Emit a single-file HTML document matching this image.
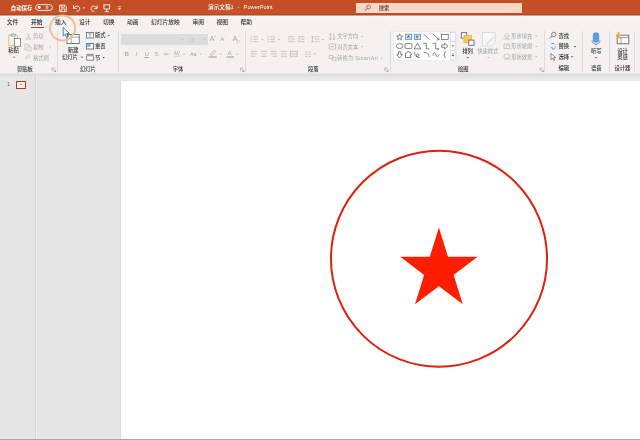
<!DOCTYPE html>
<html lang="zh"><head><meta charset="utf-8"><title>PowerPoint</title>
<style>
html,body{margin:0;padding:0}
body{width:640px;height:440px;overflow:hidden;position:relative;background:#e6e6e6;font-family:"Liberation Sans","Noto Sans CJK SC",sans-serif}
.t{position:absolute;font-size:6px;line-height:8px;height:8px;white-space:nowrap;color:#333;font-weight:500}
.w{color:#fff}
.g{color:#a4a4a4;font-weight:400}
.b{font-weight:bold}
svg{position:absolute;left:0;top:0}
#ui{position:absolute;left:0;top:0;width:640px;height:100px;filter:blur(0.35px)}
</style></head><body>
<div style="position:absolute;left:0;top:0;width:640px;height:15px;background:linear-gradient(#c44f27 0,#c44f27 9.6px,#c3522b 10.4px,#c3522b 13.5px,#b34a24 14.2px,#b04822 15px)"></div>
<div style="position:absolute;left:0;top:15px;width:640px;height:1px;background:#d6a18e"></div>
<div style="position:absolute;left:0;top:16px;width:640px;height:57px;background:linear-gradient(#fbfaf9 0,#fbfaf9 1px,#f3f2f1 1.6px)"></div>
<div style="position:absolute;left:0;top:73px;width:640px;height:7px;background:linear-gradient(#e9e9e8 0,#e9e9e8 1px,#dcdcdc 1px,#dcdcdc 2px,#e0e0e0 2px,#e0e0e0 3px,#e4e4e4 3px,#e4e4e4 4px,#e7e7e7 4px,#e7e7e7 5px,#e9e9e9 5px,#e9e9e9 6px,#eaeaea 6px)"></div>
<div style="position:absolute;left:35px;top:75px;width:1px;height:364px;background:#dadada;box-shadow:1px 0 0 #ebebeb"></div>
<div style="position:absolute;left:120px;top:80px;width:520px;height:359px;background:#fff;border-left:1px solid #dcdcdc;border-top:1px solid #e6e6e6;box-sizing:border-box"></div>
<div style="position:absolute;left:0;top:439px;width:640px;height:1px;background:#a6a6a6"></div>
<div style="position:absolute;left:356px;top:3px;width:166.4px;height:10px;background:#fbd7c4"></div>
<div style="position:absolute;left:31.2px;top:27px;width:12.4px;height:1.2px;background:#b5442a"></div>
<div style="position:absolute;left:56.699999999999996px;top:31px;width:1.1px;height:41px;background:#dddcdb"></div>
<div style="position:absolute;left:117.80000000000001px;top:31px;width:1.1px;height:41px;background:#dddcdb"></div>
<div style="position:absolute;left:244.8px;top:31px;width:1.1px;height:41px;background:#dddcdb"></div>
<div style="position:absolute;left:390.0px;top:31px;width:1.1px;height:41px;background:#dddcdb"></div>
<div style="position:absolute;left:544.1999999999999px;top:31px;width:1.1px;height:41px;background:#dddcdb"></div>
<div style="position:absolute;left:581.8px;top:31px;width:1.1px;height:41px;background:#dddcdb"></div>
<div style="position:absolute;left:608.8px;top:31px;width:1.1px;height:41px;background:#dddcdb"></div>
<div style="position:absolute;left:634.4px;top:31px;width:1.1px;height:41px;background:#dddcdb"></div>
<div style="position:absolute;left:121.4px;top:34.1px;width:64.2px;height:11px;background:#dddddd"></div>
<div style="position:absolute;left:186.1px;top:34.1px;width:21.8px;height:11px;background:#dddddd"></div>
<div style="position:absolute;left:394.4px;top:32px;width:61.2px;height:28px;background:#fff;box-shadow:0 0 0 0.5px #e4e4e4"></div>
<div style="position:absolute;left:16.1px;top:81px;width:8.2px;height:5.5px;background:#fdeee8;border:1px solid #8e4632;box-shadow:0 0 0 0.8px #f8e0d6"></div>
<div style="position:absolute;left:20.4px;top:84.3px;width:1.6px;height:1px;background:#f08080"></div>
<svg width="640" height="440" viewBox="0 0 640 440">
<circle cx="439" cy="258.7" r="108.05" stroke="#dc220e" stroke-width="2" fill="none"/>
<polygon points="438.90,227.50 448.02,256.83 477.55,256.83 453.66,274.96 462.79,304.29 438.90,286.16 415.01,304.29 424.14,274.96 400.25,256.83 429.78,256.83" fill="#ff1e00"/>
</svg>
<div id="ui">
<svg width="640" height="100" viewBox="0 0 640 100">
<rect x="35.6" y="4.6" width="16.8" height="5.9" rx="2.95" stroke="#fff" fill="none" stroke-width="0.85"/>
<circle cx="39.2" cy="7.55" r="1.45" fill="#fff"/>
<path d="M59.7 5.1h5.2l1.4 1.4v5.1h-6.6z M61.1 5.1v2.1h3.2v-2.1 M61.1 11.6v-2.6h3.8v2.6" stroke="#fff" fill="none" stroke-width="0.85"/>
<path d="M73.5 5.3v3.1h3.1 M73.7 8.2c1.2-2.6 5.6-3 6 .1c.2 1.8-1.2 2.7-3.2 3.1" stroke="#fff" fill="none" stroke-width="0.85"/>
<path d="M82.6 7.4l1.3 1.4 1.3-1.4z" fill="#fff"/>
<path d="M97.2 5.3v3.1h-3.1 M97 8.2c-1.2-2.6-5.6-3-6 .1c-.2 1.8 1.2 2.7 3.2 3.1" stroke="#fff" fill="none" stroke-width="0.85"/>
<path d="M103.4 4.8h6.8 M104 4.8v4.2h5.6v-4.2 M106.8 9v2.4 M104.8 11.6h4" stroke="#fff" fill="none" stroke-width="0.85"/>
<path d="M117.8 6.7h3.4" stroke="#ffe2d4" stroke-width="0.7"/><path d="M117.7 8l1.8 1.9 1.8-1.9z" fill="#ffe2d4"/>
<circle cx="368.6" cy="7" r="1.9" stroke="#7a4432" fill="none" stroke-width="0.7"/><path d="M367.2 8.4l-2.2 2.3" stroke="#7a4432" stroke-width="0.8"/>
<path d="M12.8 56.8l1.2 1.3 1.2-1.3z" fill="#555"/>
<path d="M49.0 46.5l1.3 1.3 1.3-1.3z" fill="#bbb"/>
<path d="M14 45.4h-5.3v-10.4h2.2 M15.2 35h2.2v3.2" stroke="#e6c35c" fill="none" stroke-width="0.85"/>
<path d="M10.9 36v-1.5h1.2l1-1.3 1 1.3h1.3v1.5z" stroke="#8a8a8a" fill="#f3f2f1" stroke-width="0.7"/>
<rect x="14.3" y="38.5" width="6.2" height="7.8" fill="#fff" stroke="#6a6a6a" stroke-width="0.75"/>
<path d="M27.3 33.6l2.2 4.6 M29.7 33.6l-2.2 4.6" stroke="#b4b4b4" stroke-width="0.6" fill="none"/><circle cx="27" cy="38.8" r="0.8" stroke="#b4b4b4" fill="none" stroke-width="0.5"/><circle cx="30" cy="38.8" r="0.8" stroke="#b4b4b4" fill="none" stroke-width="0.5"/>
<path d="M24.8 44h3.2l1.4 1.4v3.2 M24.8 44v5.6h2" stroke="#b4b4b4" fill="none" stroke-width="0.6"/><path d="M27.2 46h2.6l1.4 1.4v3.4h-4z" stroke="#b4b4b4" fill="none" stroke-width="0.6"/>
<path d="M25 57.6l3.6-2.4 1 1.6-3 2.2z M28.8 55.4l1.8-1.4" stroke="#b4b4b4" fill="none" stroke-width="0.6"/>
<path d="M52.2 70.8v-2.6h2.6 M53.6 69.60000000000001l1.8 1.8 M55.6 69.8v1.8h-1.8" stroke="#777" fill="none" stroke-width="0.5"/>
<path d="M80.7 56.7l1.3 1.3 1.3-1.3z" fill="#555"/>
<path d="M107.3 34.9l1.3 1.3 1.3-1.3z" fill="#555"/>
<path d="M102.3 57.1l1.3 1.3 1.3-1.3z" fill="#555"/>
<rect x="67" y="34.5" width="12.2" height="9" fill="#fff" stroke="#6c7c7c" stroke-width="1"/><path d="M71.1 34.5v9 M71.1 37.2h8" stroke="#7a9090" stroke-width="0.8"/><path d="M68.4 32.6v4 M66.4 34.6h4" stroke="#3a9a5a" stroke-width="0.9"/>
<rect x="86.6" y="32.6" width="7" height="5.4" fill="#fff" stroke="#555" stroke-width="0.7"/><path d="M88 34h4.2 M90 34v4" stroke="#47a" stroke-width="0.6"/>
<rect x="86.6" y="43.6" width="7" height="5.4" fill="#fff" stroke="#555" stroke-width="0.8"/><path d="M87.2 44.2h3.4v2.6h-3.4z" fill="#7fa8d0"/>
<path d="M86.6 54.4h7 M86.6 55.8h7v4.4h-7z" fill="#fff" stroke="#555" stroke-width="0.7"/>
<path d="M181.3 39.3l1.3 1.3 1.3-1.3z" fill="#bbb"/><path d="M203.5 39.3l1.3 1.3 1.3-1.3z" fill="#bbb"/>
<path d="M236.6 42.6l2.4-2.4 1 1-2.4 2.4z" stroke="#b4b4b4" fill="none" stroke-width="0.5"/>
<path d="M182.9 53.7l1.3 1.3 1.3-1.3z" fill="#bbb"/>
<path d="M174 56.2h6.4" stroke="#b4b4b4" stroke-width="0.5"/>
<path d="M199.3 53.7l1.3 1.3 1.3-1.3z" fill="#bbb"/>
<path d="M210 54.6l4.2-4.4 1.4 1.4-4.2 4.2z" stroke="#999" fill="none" stroke-width="0.6"/><path d="M208.4 57h8.4" stroke="#a8a8a8" stroke-width="1.2"/><path d="M219.3 53.7l1.3 1.3 1.3-1.3z" fill="#bbb"/>
<path d="M226.4 57h7.6" stroke="#a8a8a8" stroke-width="1.2"/><path d="M236.1 53.7l1.3 1.3 1.3-1.3z" fill="#bbb"/>
<path d="M240.4 70.8v-2.6h2.6 M241.8 69.60000000000001l1.8 1.8 M243.8 69.8v1.8h-1.8" stroke="#777" fill="none" stroke-width="0.5"/>
<path d="M253 36.7h5 M253 39.2h5 M253 41.7h5" stroke="#adadad" stroke-width="0.65" fill="none"/><path d="M250.6 36.7h1.1 M250.6 39.2h1.1 M250.6 41.7h1.1" stroke="#adadad" stroke-width="0.9"/><path d="M261 38.9l1.3 1.3 1.3-1.3z" fill="#b4b4b4"/>
<path d="M270.2 36.7h5 M270.2 39.2h5 M270.2 41.7h5" stroke="#adadad" stroke-width="0.65" fill="none"/><path d="M267.6 36.7h1.1 M267.6 39.2h1.1 M267.6 41.7h1.1" stroke="#adadad" stroke-width="0.9"/><path d="M277.6 38.9l1.3 1.3 1.3-1.3z" fill="#b4b4b4"/>
<path d="M288.2 36.7h6.4 M291.4 39.2h3.2 M288.2 41.7h6.4 M290 38l-1.6 1.2 1.6 1.2" stroke="#adadad" stroke-width="0.65" fill="none"/>
<path d="M298 36.7h6.4 M301.2 39.2h3.2 M298 41.7h6.4 M298.2 38l1.6 1.2-1.6 1.2" stroke="#adadad" stroke-width="0.65" fill="none"/>
<path d="M314.6 36.7h4.8 M314.6 39.2h4.8 M314.6 41.7h4.8 M312.4 36v6.4 M311.4 37.2l1-1.2 1 1.2 M311.4 41.2l1 1.2 1-1.2" stroke="#adadad" stroke-width="0.65" fill="none"/><path d="M321.6 38.9l1.3 1.3 1.3-1.3z" fill="#b4b4b4"/>
<path d="M250.8 51.4h6.2 M250.8 53.9h6.2 M250.8 56.3h4.4" stroke="#adadad" stroke-width="0.65" fill="none"/>
<path d="M260.8 51.4h6.2 M261.7 53.9h4.4 M260.8 56.3h6.2" stroke="#adadad" stroke-width="0.65" fill="none"/>
<path d="M270.6 51.4h6.2 M270.6 53.9h6.2 M272.4 56.3h4.4" stroke="#adadad" stroke-width="0.65" fill="none"/>
<path d="M280.8 51.4h6.2 M280.8 53.9h6.2 M280.8 56.3h6.2" stroke="#adadad" stroke-width="0.65" fill="none"/>
<path d="M290.4 51.4h6.8 M290.4 53.9h6.8 M290.4 56.3h6.8 M290.4 50.6v6.6 M297.2 50.6v6.6" stroke="#adadad" stroke-width="0.65" fill="none"/>
<path d="M305 52h2.4 M305 54.2h2.4 M305 56.4h2.4 M308.6 52h2.4 M308.6 54.2h2.4 M308.6 56.4h2.4" stroke="#adadad" stroke-width="0.65" fill="none"/><path d="M313.6 53.6l1.3 1.3 1.3-1.3z" fill="#b4b4b4"/>
<path d="M360.9 35.9l1.3 1.3 1.3-1.3z" fill="#bbb"/>
<path d="M360.9 46.3l1.3 1.3 1.3-1.3z" fill="#bbb"/>
<path d="M380.3 57.7l1.3 1.3 1.3-1.3z" fill="#bbb"/>
<path d="M330.4 33.4v6.4 M329.2 34.8l1.2-1.4 1.2 1.4 M329.2 38.4l1.2 1.4 1.2-1.4 M334 33.4v6.4 M332.8 38.4l1.2 1.4 1.2-1.4" stroke="#adadad" stroke-width="0.65" fill="none"/>
<path d="M329.2 44h6.4v5.2h-6.4z M330.8 46.6h3.2" stroke="#adadad" stroke-width="0.65" fill="none"/>
<path d="M329.2 55.4h3.6v3h-3.6z M332.4 57.4h3.6v3h-3.6z" stroke="#adadad" stroke-width="0.65" fill="none"/>
<path d="M384.8 70.8v-2.6h2.6 M386.2 69.60000000000001l1.8 1.8 M388.2 69.8v1.8h-1.8" stroke="#777" fill="none" stroke-width="0.5"/>
<polygon points="399.60,33.80 400.47,35.90 402.74,36.08 401.01,37.56 401.54,39.77 399.60,38.58 397.66,39.77 398.19,37.56 396.46,36.08 398.73,35.90" stroke="#444" stroke-width="0.65" fill="none"/>
<rect x="405.3" y="34.199999999999996" width="6.4" height="5.2" fill="#cfe0f2" stroke="#3a78b8" stroke-width="0.65"/>
<rect x="414.3" y="34.199999999999996" width="6.4" height="5.2" fill="#cfe0f2" stroke="#3a78b8" stroke-width="0.65"/>
<text x="408.5" y="38.3" font-size="4.2" text-anchor="middle" fill="#2a5a90" font-family="Liberation Sans, sans-serif">A</text>
<path d="M416.3 35.4l2.4 1.4-2.4 1.4z" fill="#2a5a90"/>
<path d="M423.5 33.8l6 6" stroke="#444" stroke-width="0.65" fill="none"/>
<path d="M432.9 33.8l6 6 M438.9 37.8v2h-2" stroke="#444" stroke-width="0.65" fill="none"/>
<rect x="441.59999999999997" y="34.3" width="6.6" height="5" stroke="#444" stroke-width="0.65" fill="none"/>
<ellipse cx="399.6" cy="46.1" rx="3.4" ry="2.4" stroke="#444" stroke-width="0.65" fill="none"/>
<rect x="405.1" y="43.6" width="6.8" height="5" rx="1" stroke="#444" stroke-width="0.65" fill="none"/>
<path d="M417.5 43.1l3.2 5.8h-6.4z" stroke="#444" stroke-width="0.65" fill="none"/>
<path d="M423.3 43.300000000000004h3v5.6h3.2" stroke="#444" stroke-width="0.65" fill="none"/>
<path d="M432.7 43.300000000000004h3v5.6h3.2 M437.9 47.9l1 1-1 1" stroke="#444" stroke-width="0.65" fill="none"/>
<path d="M441.7 44.9h3v-1.6l3.2 2.8-3.2 2.8v-1.6h-3z" stroke="#444" stroke-width="0.65" fill="none"/>
<path d="M398.40000000000003 51.7h2.4v3h1.6l-2.8 3.2-2.8-3.2h1.6z" stroke="#444" stroke-width="0.65" fill="none"/>
<path d="M405.5 57.5v-4.4c1.6 0 2-.6 2.2-1.6c1.6 0 3.6 1 3.8 3.2l-1.4.2 1 2.6z" stroke="#444" stroke-width="0.65" fill="none"/>
<path d="M414.7 52.1c0 3 .8 4.6 2.4 4.6s2.6-1.6 1.6-2.6s-2.6 0-2 2s2.4 1.8 3.8 1" stroke="#444" stroke-width="0.65" fill="none"/>
<path d="M423.5 52.300000000000004c3.4 0 5.6 1.8 5.8 5" stroke="#444" stroke-width="0.65" fill="none"/>
<path d="M432.7 55.7c1.2-4 2.4-4 3.2-1s2 2.6 3.2-.6" stroke="#444" stroke-width="0.65" fill="none"/>
<path d="M445.9 51.5c-1.4 0-1.2 1-1.2 2s-.4 1.2-1 1.2c.6 0 1 .2 1 1.2s-.2 2 1.2 2" stroke="#444" stroke-width="0.65" fill="none"/>
<rect x="450.6" y="32.4" width="4.8" height="8.8" fill="#fbfbfb" stroke="#c8c8c8" stroke-width="0.5"/>
<rect x="450.6" y="41.6" width="4.8" height="8.8" fill="#fbfbfb" stroke="#c8c8c8" stroke-width="0.5"/>
<rect x="450.6" y="50.8" width="4.8" height="8.8" fill="#fbfbfb" stroke="#c8c8c8" stroke-width="0.5"/>
<path d="M452 37.4l1-1 1 1z" fill="#ccc"/><path d="M451.7 45.5l1.3 1.3 1.3-1.3z" fill="#444"/><path d="M452 54h2" stroke="#444" stroke-width="0.5"/><path d="M451.7 55.1l1.3 1.3 1.3-1.3z" fill="#444"/>
<rect x="461.3" y="32.7" width="5.4" height="5.4" fill="#fff" stroke="#5a5266" stroke-width="0.8"/><rect x="464" y="35.4" width="7.4" height="7.4" fill="#f6cd57" stroke="#e0b030" stroke-width="0.7"/><rect x="468.8" y="40.1" width="5.2" height="5.2" fill="#fff" stroke="#5a5266" stroke-width="0.8"/>
<path d="M466.5 56.9l1.3 1.3 1.3-1.3z" fill="#555"/>
<path d="M482.4 32.6h12.6v9.6l-3.8 3.8h-8.8z" fill="#f8f8f8" stroke="#bdbdbd" stroke-width="0.7" stroke-dasharray="1.2 0.6"/><path d="M487 43l5.4-5.4 1 1-5.4 5.4-1.4.4z" fill="none" stroke="#bbb" stroke-width="0.5"/>
<path d="M487.1 56.9l1.3 1.3 1.3-1.3z" fill="#bbb"/>
<path d="M534.9 35.7l1.3 1.3 1.3-1.3z" fill="#bbb"/>
<path d="M534.9 45.9l1.3 1.3 1.3-1.3z" fill="#bbb"/>
<path d="M534.9 56.3l1.3 1.3 1.3-1.3z" fill="#bbb"/>
<path d="M504.4 36l2.4-2.6 2.4 2.6-2.4 1.6z M503.4 39h6.8" stroke="#adadad" stroke-width="0.65" fill="none"/>
<path d="M504 44h5.6v4.6h-5.6z M505.6 47.6l3-3.4" stroke="#adadad" stroke-width="0.65" fill="none"/>
<ellipse cx="506.8" cy="56.2" rx="3" ry="2.2" stroke="#adadad" stroke-width="0.65" fill="none"/><path d="M504.4 58.6c1.6.8 3.8.8 5.2-.2" stroke="#adadad" stroke-width="0.65" fill="none"/>
<path d="M540 70.8v-2.6h2.6 M541.4 69.60000000000001l1.8 1.8 M543.4 69.8v1.8h-1.8" stroke="#777" fill="none" stroke-width="0.5"/>
<path d="M573.7 46.1l1.3 1.3 1.3-1.3z" fill="#555"/>
<path d="M570.7 56.3l1.3 1.3 1.3-1.3z" fill="#555"/>
<circle cx="553.8" cy="34.4" r="2.2" stroke="#555" fill="none" stroke-width="0.7"/><path d="M552.2 36l-2.4 2.6" stroke="#555" stroke-width="0.8"/>
<path d="M551 44.2c1-1.4 3-1.2 3.8.2 M555 46.6c.6 1.6-1 2.8-2.4 2.4" stroke="#3a78b8" fill="none" stroke-width="0.7"/><path d="M550.4 47.6h2v2" stroke="#3a78b8" fill="none" stroke-width="0.6"/>
<path d="M551 53.6v6l1.6-1.4 1.2 2.2 1-.5-1.2-2.2 2-.2z" fill="#fff" stroke="#444" stroke-width="0.6"/>
<rect x="593.2" y="32.8" width="5.6" height="9.4" rx="2" fill="#5aa0e0" stroke="#3f86cc" stroke-width="0.5"/><path d="M592 40.4c0 5 8 5 8 0 M596 44.2v1.4" stroke="#667" fill="none" stroke-width="0.7"/>
<path d="M594.7 57.3l1.3 1.3 1.3-1.3z" fill="#555"/>
<rect x="617.2" y="35.2" width="11.6" height="8.6" fill="#fff" stroke="#555" stroke-width="0.8"/><path d="M617.2 37.6h11.6 M621 37.6v6.2" stroke="#555" stroke-width="0.6"/><path d="M618.4 32.2l-2.6 4h2l-1 3.4 3.4-4.6h-2l1.6-2.8z" fill="#f0b030" stroke="#e0a020" stroke-width="0.3"/>
<circle cx="62.6" cy="27.9" r="12.5" stroke="#f0bd9b" stroke-width="2" fill="none"/>
<path d="M63.2 27.5v8.4l2-1.7 1.4 3 1.4-.6-1.4-3 2.7-.2z" fill="#fff" stroke="#2a6a80" stroke-width="0.8" stroke-linejoin="round"/>
</svg>
<span class="t w b" style="left:10.8px;top:3.70px;font-size:5.4px;">自动保存</span>
<span class="t w" style="left:45.3px;top:3.60px;font-size:3.6px;">关</span>
<span class="t w" style="left:208px;top:3.40px;font-size:5.65px;">演示文稿1</span>
<span class="t w" style="left:237.6px;top:3.20px;font-size:5.6px;">-</span>
<span class="t w" style="left:243.6px;top:3.40px;font-size:5.7px;">PowerPoint</span>
<span class="t " style="left:378.7px;top:3.60px;font-size:5.3px;color:#5a3428">搜索</span>
<span class="t " style="left:6.8px;top:17.70px;font-size:5.75px;">文件</span>
<span class="t b" style="left:31.0px;top:17.70px;font-size:5.75px;">开始</span>
<span class="t " style="left:55.0px;top:17.70px;font-size:5.75px;">插入</span>
<span class="t " style="left:79.0px;top:17.70px;font-size:5.75px;">设计</span>
<span class="t " style="left:103.0px;top:17.70px;font-size:5.75px;">切换</span>
<span class="t " style="left:127.0px;top:17.70px;font-size:5.75px;">动画</span>
<span class="t " style="left:151.0px;top:17.70px;font-size:5.75px;">幻灯片放映</span>
<span class="t " style="left:192.4px;top:17.70px;font-size:5.75px;">审阅</span>
<span class="t " style="left:216.60000000000002px;top:17.70px;font-size:5.75px;">视图</span>
<span class="t " style="left:240.4px;top:17.70px;font-size:5.75px;">帮助</span>
<span class="t " style="left:8.2px;top:46.20px;font-size:5.3px;">粘贴</span>
<span class="t g" style="left:33px;top:32.00px;font-size:5.25px;">剪切</span>
<span class="t g" style="left:33px;top:43.00px;font-size:5.25px;">复制</span>
<span class="t g" style="left:33px;top:53.50px;font-size:5.25px;">格式刷</span>
<span class="t " style="left:17px;top:64.80px;font-size:5.3px;">剪贴板</span>
<span class="t " style="left:67.7px;top:46.40px;font-size:5.4px;">新建</span>
<span class="t " style="left:62px;top:53.20px;font-size:5.3px;">幻灯片</span>
<span class="t " style="left:95px;top:31.40px;font-size:5.3px;">版式</span>
<span class="t " style="left:95px;top:42.30px;font-size:5.3px;">重置</span>
<span class="t " style="left:95px;top:53.50px;font-size:5.3px;">节</span>
<span class="t " style="left:80px;top:64.80px;font-size:5.3px;">幻灯片</span>
<span class="t " style="left:189px;top:35.60px;font-size:5px;color:#c8c8c8">18</span>
<span class="t g" style="left:209.8px;top:35.20px;font-size:7px;">A</span>
<span class="t g" style="left:214.4px;top:33.20px;font-size:3.6px;">^</span>
<span class="t g" style="left:220.2px;top:35.20px;font-size:6px;">A</span>
<span class="t g" style="left:224.2px;top:32.80px;font-size:4px;">ˇ</span>
<span class="t g" style="left:232.8px;top:35.20px;font-size:7px;">A</span>
<span class="t g b" style="left:124.6px;top:49.80px;font-size:6.2px;">B</span>
<span class="t g" style="left:135.6px;top:49.80px;font-size:6.2px;"><i>I</i></span>
<span class="t g" style="left:144.4px;top:49.80px;font-size:6.2px;"><u>U</u></span>
<span class="t g" style="left:154.6px;top:49.80px;font-size:6.2px;">S</span>
<span class="t g" style="left:163.4px;top:50.20px;font-size:3.8px;">abc</span>
<span class="t g" style="left:173.8px;top:49.60px;font-size:4.8px;">AV</span>
<span class="t g" style="left:190px;top:50.00px;font-size:5.4px;">Aa</span>
<span class="t g" style="left:227.6px;top:49.20px;font-size:6.2px;">A</span>
<span class="t " style="left:172.8px;top:64.80px;font-size:5.3px;">字体</span>
<span class="t g" style="left:337.3px;top:32.20px;font-size:5.25px;">文字方向</span>
<span class="t g" style="left:337.3px;top:42.70px;font-size:5.25px;">对齐文本</span>
<span class="t g" style="left:337px;top:54.00px;font-size:5.25px;letter-spacing:0.28px">转换为 SmartArt</span>
<span class="t " style="left:308px;top:64.80px;font-size:5.3px;">段落</span>
<span class="t " style="left:462.2px;top:46.60px;font-size:5.3px;">排列</span>
<span class="t g" style="left:477.2px;top:46.60px;font-size:5.25px;">快速样式</span>
<span class="t g" style="left:511.2px;top:32.00px;font-size:5.25px;">形状填充</span>
<span class="t g" style="left:511.2px;top:42.20px;font-size:5.25px;">形状轮廓</span>
<span class="t g" style="left:511.2px;top:52.60px;font-size:5.25px;">形状效果</span>
<span class="t " style="left:458px;top:65.00px;font-size:5.3px;">绘图</span>
<span class="t " style="left:558.4px;top:31.60px;font-size:5.3px;">查找</span>
<span class="t " style="left:558.4px;top:42.40px;font-size:5.3px;">替换</span>
<span class="t " style="left:558.4px;top:52.70px;font-size:5.3px;">选择</span>
<span class="t " style="left:558.4px;top:64.30px;font-size:5.3px;">编辑</span>
<span class="t " style="left:591px;top:47.00px;font-size:5.3px;">听写</span>
<span class="t " style="left:591px;top:64.30px;font-size:5.3px;">语音</span>
<span class="t " style="left:617.2px;top:46.60px;font-size:5.3px;">设计</span>
<span class="t " style="left:617.2px;top:53.40px;font-size:5.3px;">灵感</span>
<span class="t " style="left:614.4px;top:64.30px;font-size:5.3px;">设计器</span>
<span class="t " style="left:6.9px;top:80.20px;font-size:6px;color:#707070">1</span>
</div>
</body></html>
